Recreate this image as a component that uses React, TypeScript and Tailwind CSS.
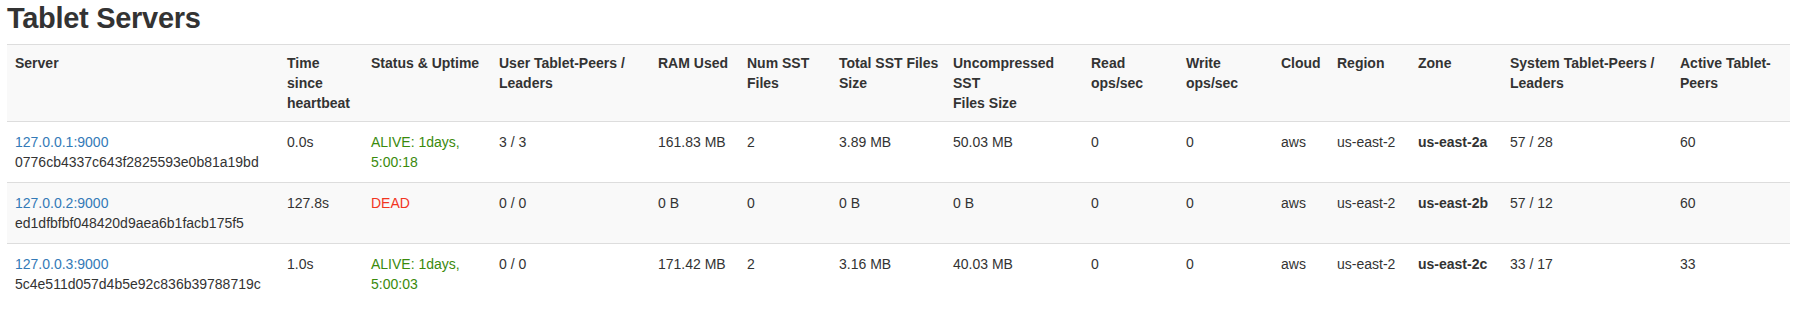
const columns = [
  { label: "Server", w: "w-[272px]" },
  { label: "Time since heartbeat", w: "w-[84px]" },
  { label: "Status & Uptime", w: "w-[128px]" },
  { label: "User Tablet-Peers / Leaders", w: "w-[159px]" },
  { label: "RAM Used", w: "w-[89px]" },
  { label: "Num SST Files", w: "w-[92px]" },
  { label: "Total SST Files Size", w: "w-[114px] pr-1" },
  { label: "Uncompressed SST|Files Size", w: "w-[138px]" },
  { label: "Read ops/sec", w: "w-[95px]" },
  { label: "Write ops/sec", w: "w-[95px]" },
  { label: "Cloud", w: "w-[56px]" },
  { label: "Region", w: "w-[81px]" },
  { label: "Zone", w: "w-[92px]" },
  { label: "System Tablet-Peers / Leaders", w: "w-[170px]" },
  { label: "Active Tablet-Peers", w: "w-[118px]" },
];

const servers = [
  {
    addr: "127.0.0.1:9000",
    uuid: "0776cb4337c643f2825593e0b81a19bd",
    heartbeat: "0.0s",
    alive: true,
    uptime: "1days, 5:00:18",
    userPeers: "3 / 3",
    ram: "161.83 MB",
    sstFiles: "2",
    sstSize: "3.89 MB",
    uncompressed: "50.03 MB",
    read: "0",
    write: "0",
    cloud: "aws",
    region: "us-east-2",
    zone: "us-east-2a",
    systemPeers: "57 / 28",
    active: "60",
  },
  {
    addr: "127.0.0.2:9000",
    uuid: "ed1dfbfbf048420d9aea6b1facb175f5",
    heartbeat: "127.8s",
    alive: false,
    uptime: "",
    userPeers: "0 / 0",
    ram: "0 B",
    sstFiles: "0",
    sstSize: "0 B",
    uncompressed: "0 B",
    read: "0",
    write: "0",
    cloud: "aws",
    region: "us-east-2",
    zone: "us-east-2b",
    systemPeers: "57 / 12",
    active: "60",
  },
  {
    addr: "127.0.0.3:9000",
    uuid: "5c4e511d057d4b5e92c836b39788719c",
    heartbeat: "1.0s",
    alive: true,
    uptime: "1days, 5:00:03",
    userPeers: "0 / 0",
    ram: "171.42 MB",
    sstFiles: "2",
    sstSize: "3.16 MB",
    uncompressed: "40.03 MB",
    read: "0",
    write: "0",
    cloud: "aws",
    region: "us-east-2",
    zone: "us-east-2c",
    systemPeers: "33 / 17",
    active: "33",
  },
];

export default function App() {
  return (
    <div className="bg-white px-[7px] pt-[2px] font-['Liberation_Sans',Arial,sans-serif] text-[14px] leading-[20px] text-[#333]">
      <h2 className="mb-[9px] text-[29px] leading-[33px] font-bold tracking-[-0.3px] text-[#333]">Tablet Servers</h2>

      <table className="w-[1783px] table-fixed border-collapse">
        <thead>
          <tr className="border-t border-b border-[#ddd] bg-[#f9f9f9]">
            {columns.map((col) => (
              <th key={col.label} className={`${col.w} px-2 py-2 text-left align-top font-bold`}>
                {col.label.split("|").map((part, i) => (
                  <span key={i}>
                    {i > 0 && <br />}
                    {part}
                  </span>
                ))}
              </th>
            ))}
          </tr>
        </thead>
        <tbody>
          {servers.map((s, index) => (
            <tr key={s.addr} className={`${index > 0 ? "border-t border-[#ddd]" : ""} ${index % 2 === 1 ? "bg-[#f9f9f9]" : "bg-white"}`}>
              <td className="px-2 py-[10px] align-top">
                <a href="#" className="text-[#337ab7]">
                  {s.addr}
                </a>
                <br />
                {s.uuid}
              </td>
              <td className="px-2 py-[10px] align-top">{s.heartbeat}</td>
              <td className="px-2 py-[10px] align-top">
                {s.alive ? (
                  <span className="text-[#3a8a0c]">ALIVE: {s.uptime}</span>
                ) : (
                  <span className="text-[#f2351f]">DEAD</span>
                )}
              </td>
              <td className="px-2 py-[10px] align-top">{s.userPeers}</td>
              <td className="px-2 py-[10px] align-top">{s.ram}</td>
              <td className="px-2 py-[10px] align-top">{s.sstFiles}</td>
              <td className="px-2 py-[10px] align-top">{s.sstSize}</td>
              <td className="px-2 py-[10px] align-top">{s.uncompressed}</td>
              <td className="px-2 py-[10px] align-top">{s.read}</td>
              <td className="px-2 py-[10px] align-top">{s.write}</td>
              <td className="px-2 py-[10px] align-top">{s.cloud}</td>
              <td className="px-2 py-[10px] align-top">{s.region}</td>
              <td className="px-2 py-[10px] align-top font-bold">{s.zone}</td>
              <td className="px-2 py-[10px] align-top">{s.systemPeers}</td>
              <td className="px-2 py-[10px] align-top">{s.active}</td>
            </tr>
          ))}
        </tbody>
      </table>
    </div>
  );
}
